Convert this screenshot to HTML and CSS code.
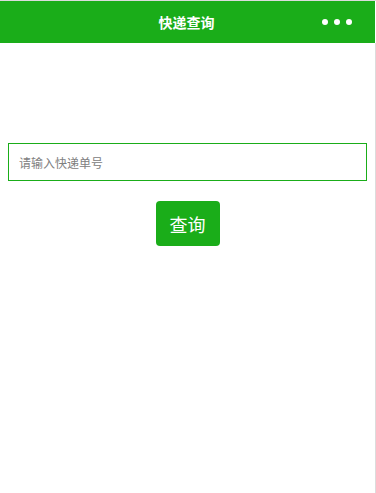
FILE: index.html
```html
<!DOCTYPE html>
<html lang="zh-CN">
<head>
<meta charset="utf-8">
<title>快递查询</title>
<link rel="stylesheet" href="styles.css">
</head>
<body>
<div class="page">
  <header class="nav">
    <div class="nav-title">快递查询</div>
    <div class="nav-more"><span></span><span></span><span></span></div>
  </header>
  <main class="content">
    <input class="order-input" type="text" placeholder="请输入快递单号">
    <div class="btn-row"><button class="query-btn" type="button">查询</button></div>
  </main>
</div>
</body>
</html>
```
FILE: styles.css
```css
html, body {
  margin: 0;
  padding: 0;
  background: #fff;
  font-family: "Noto Sans CJK SC", "Noto Sans", sans-serif;
}
.page {
  width: 376px;
  height: 493px;
  border-top: 1px solid #dcdcdc;
  box-sizing: border-box;
  display: flex;
  flex-direction: column;
}
.nav {
  width: 375px;
  height: 42px;
  background: #1aad19;
  position: relative;
  display: flex;
  align-items: center;
  justify-content: center;
  flex-shrink: 0;
}
.nav-title {
  color: #fff;
  font-size: 14px;
  font-weight: bold;
  margin-left: -2px;
}
.nav-more {
  position: absolute;
  right: 23px;
  top: 18px;
  display: flex;
  gap: 6px;
}
.nav-more span {
  width: 6px;
  height: 6px;
  border-radius: 50%;
  background: #fff;
}
.content {
  flex: 1;
  border-right: 1px solid #dcdcdc;
  padding-top: 100px;
}
.order-input {
  display: block;
  margin-left: 8px;
  width: 359px;
  height: 38px;
  box-sizing: border-box;
  border: 1px solid #1aad19;
  outline: none;
  padding: 0 10px;
  font-family: "Noto Sans CJK SC", "Noto Sans", sans-serif;
  font-size: 12px;
  color: #333;
  background: #fff;
}
.order-input::placeholder {
  color: #808080;
}
.btn-row {
  display: flex;
  justify-content: center;
  margin-top: 20px;
}
.query-btn {
  width: 64px;
  height: 45px;
  border: none;
  border-radius: 4px;
  background: #1aad19;
  color: #fff;
  font-family: "Noto Sans CJK SC", "Noto Sans", sans-serif;
  font-size: 18px;
  padding: 0;
}
```
